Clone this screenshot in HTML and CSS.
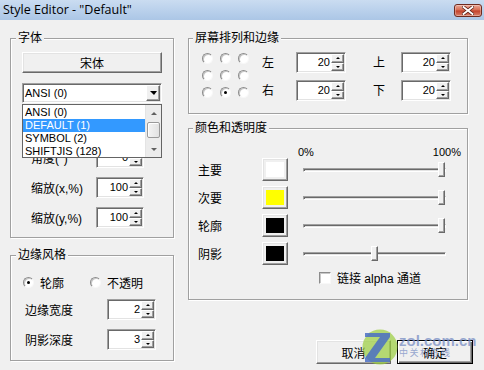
FILE: index.html
```html
<!DOCTYPE html>
<html>
<head>
<meta charset="utf-8">
<title>Style Editor</title>
<link rel="stylesheet" href="styles.css">
</head>
<body>
<div class="window">
  <div class="titlebar">
    <span class="title">Style Editor - "Default"</span>
    <span class="close"><svg width="12" height="9" viewBox="0 0 12 9"><path d="M1.5 1L10.5 8M10.5 1L1.5 8" stroke="#5a2018" stroke-width="3.4" stroke-linecap="square"/><path d="M1.5 1L10.5 8M10.5 1L1.5 8" stroke="#fff" stroke-width="1.8" stroke-linecap="square"/></svg></span>
  </div>

  <div class="content">
    <div class="col col-left">
      <div class="group g-font">
        <div class="gtitle">字体</div>
        <div class="btn fontbtn">宋体</div>
        <div class="combo"><span class="ctext">ANSI (0)</span><span class="cbtn"><i class="tri-down"></i></span></div>
        <div class="row r-first"><span class="lbl">角度(°)</span><div class="spin"><span class="val">0</span><span class="arrows"><i class="up"></i><i class="dn"></i></span></div></div>
        <div class="row"><span class="lbl">缩放(x,%)</span><div class="spin"><span class="val">100</span><span class="arrows"><i class="up"></i><i class="dn"></i></span></div></div>
        <div class="row"><span class="lbl">缩放(y,%)</span><div class="spin"><span class="val">100</span><span class="arrows"><i class="up"></i><i class="dn"></i></span></div></div>

        <div class="dropdown">
          <div class="items">
            <div class="item">ANSI (0)</div>
            <div class="item sel">DEFAULT (1)</div>
            <div class="item">SYMBOL (2)</div>
            <div class="item">SHIFTJIS (128)</div>
          </div>
          <div class="sb">
            <div class="sb-btn"><i class="sb-up"></i></div>
            <div class="sb-track"><div class="sb-thumb"></div></div>
            <div class="sb-btn"><i class="sb-dn"></i></div>
          </div>
        </div>
      </div>

      <div class="group g-edge">
        <div class="gtitle">边缘风格</div>
        <div class="radio-row">
          <label class="ropt"><i class="radio on"></i>轮廓</label>
          <label class="ropt ropt2"><i class="radio"></i>不透明</label>
        </div>
        <div class="row r-e1"><span class="lbl">边缘宽度</span><div class="spin"><span class="val">2</span><span class="arrows"><i class="up"></i><i class="dn"></i></span></div></div>
        <div class="row"><span class="lbl">阴影深度</span><div class="spin"><span class="val">3</span><span class="arrows"><i class="up"></i><i class="dn"></i></span></div></div>
      </div>
    </div>

    <div class="col col-right">
      <div class="group g-pos">
        <div class="gtitle">屏幕排列和边缘</div>
        <div class="pos-body">
          <div class="rgrid">
            <i class="radio"></i><i class="radio"></i><i class="radio"></i>
            <i class="radio"></i><i class="radio"></i><i class="radio"></i>
            <i class="radio"></i><i class="radio on"></i><i class="radio"></i>
          </div>
          <div class="mgrid">
            <span class="mlbl">左</span>
            <div class="spin"><span class="val">20</span><span class="arrows"><i class="up"></i><i class="dn"></i></span></div>
            <span class="mlbl m2">上</span>
            <div class="spin"><span class="val">20</span><span class="arrows"><i class="up"></i><i class="dn"></i></span></div>
            <span class="mlbl">右</span>
            <div class="spin"><span class="val">20</span><span class="arrows"><i class="up"></i><i class="dn"></i></span></div>
            <span class="mlbl m2">下</span>
            <div class="spin"><span class="val">20</span><span class="arrows"><i class="up"></i><i class="dn"></i></span></div>
          </div>
        </div>
      </div>

      <div class="group g-color">
        <div class="gtitle">颜色和透明度</div>
        <div class="pct"><span>0%</span><span>100%</span></div>
        <div class="crow"><span class="clbl">主要</span><span class="swatch"><i style="background:#ffffff"></i></span><div class="slider"><div class="track"></div><i class="thumb" style="--v:1"></i></div></div>
        <div class="crow"><span class="clbl">次要</span><span class="swatch"><i style="background:#ffff00"></i></span><div class="slider"><div class="track"></div><i class="thumb" style="--v:1"></i></div></div>
        <div class="crow"><span class="clbl">轮廓</span><span class="swatch"><i style="background:#000000"></i></span><div class="slider"><div class="track"></div><i class="thumb" style="--v:1"></i></div></div>
        <div class="crow"><span class="clbl">阴影</span><span class="swatch"><i style="background:#000000"></i></span><div class="slider"><div class="track"></div><i class="thumb" style="--v:0.5"></i></div></div>
        <div class="chkrow"><i class="chk"></i><span>链接 alpha 通道</span></div>
      </div>

      <div class="buttons">
        <div class="btn dbtn">取消</div>
        <div class="btn dbtn default">确定</div>
      </div>
    </div>
  </div>

  <div class="watermark">
    <svg width="36" height="36" viewBox="0 0 36 36">
      <circle cx="18" cy="18" r="17.5" fill="#9acd3c" opacity="0.7"/>
      <path d="M3 4H28V8L13 29H28V33H3V29L18 8H3Z" fill="#4a6fc4" opacity="0.85"/>
    </svg>
    <div class="wm-text">
      <span class="wm-big">zol.com.cn</span>
      <span class="wm-small">中关村在线</span>
    </div>
  </div>
</div>
</body>
</html>
```

FILE: styles.css
```css
* { box-sizing: border-box; }
html, body { margin: 0; padding: 0; }
body {
  width: 484px;
  height: 370px;
  overflow: hidden;
  background: #f0f0f0;
  font-family: "Liberation Sans", "Noto Sans CJK SC", sans-serif;
  font-size: 12px;
  color: #000;
}
i { display: block; font-style: normal; }

.window { position: relative; width: 484px; height: 370px; }

/* title bar */
.titlebar {
  height: 20px;
  background: linear-gradient(#cadcf1, #abc6e6);
  display: flex;
  align-items: center;
  justify-content: space-between;
  padding: 0 2px 0 3px;
}
.title {
  font-family: "Open Sans", "DejaVu Sans", sans-serif;
  font-size: 12.5px;
  line-height: 20px;
  color: #000;
}
.close {
  width: 28px;
  height: 13px;
  border: 1px solid #6e2b20;
  border-radius: 3px;
  background: linear-gradient(#eaa898, #d66a50 48%, #c2402a 52%, #d9806a);
  box-shadow: inset 0 0 0 1px rgba(255,255,255,0.3);
  display: flex;
  align-items: center;
  justify-content: center;
}
.close svg { display: block; }

/* layout */
.content {
  display: flex;
  gap: 14px;
  padding: 18px 0 0 10px;
}
.col-left { width: 164px; display: flex; flex-direction: column; }
.col-right { width: 280px; display: flex; flex-direction: column; }

.group {
  position: relative;
  border: 1px solid #a0a0a0;
  box-shadow: inset 1px 1px #fff, 1px 1px #fff;
}
.gtitle {
  margin-top: -8px;
  height: 14px;
  line-height: 14px;
  width: fit-content;
  padding: 0 2px;
  background: #f0f0f0;
  white-space: nowrap;
}

/* 3D primitives */
.btn {
  display: flex;
  align-items: center;
  justify-content: center;
  background: #f0f0f0;
  border: 1px solid;
  border-color: #fff #696969 #696969 #fff;
  box-shadow: inset -1px -1px #a0a0a0, inset 1px 1px #e3e3e3;
}

.spin {
  display: flex;
  width: 48px;
  height: 21px;
  border: 1px solid;
  border-color: #a0a0a0 #fff #fff #a0a0a0;
  box-shadow: inset 1px 1px #696969, inset -1px -1px #e3e3e3;
  background: #fff;
  padding: 1px;
}
.spin .val {
  flex: 1;
  text-align: right;
  font-size: 11px;
  line-height: 17px;
  padding-right: 1px;
}
.spin .arrows {
  width: 13px;
  display: flex;
  flex-direction: column;
}
.spin .up, .spin .dn {
  flex: 1;
  position: relative;
  background: #f0f0f0;
  border: 1px solid;
  border-color: #fff #696969 #696969 #fff;
  box-shadow: inset -1px -1px #a0a0a0;
}
.spin .up::after, .spin .dn::after {
  content: "";
  position: absolute;
  left: 50%;
  top: 50%;
  margin-left: -2px;
  margin-top: -1px;
  border-left: 2px solid transparent;
  border-right: 2px solid transparent;
}
.spin .up::after { border-bottom: 2px solid #000; }
.spin .dn::after { border-top: 2px solid #000; }

.radio {
  width: 11px;
  height: 11px;
  border-radius: 50%;
  border: 1px solid;
  border-color: #8c8c8c #f8f8f8 #f8f8f8 #8c8c8c;
  background: #fff;
  box-shadow: inset 1px 1px #c8c8c8;
  position: relative;
  flex: none;
}
.radio.on::after {
  content: "";
  position: absolute;
  left: 3px;
  top: 3px;
  width: 3px;
  height: 3px;
  border-radius: 50%;
  background: #000;
}

/* font group */
.g-font { padding: 0 11px 9px 11px; }
.g-font .gtitle { margin-left: -6px; }
.fontbtn { margin-top: 7px; height: 21px; }
.combo {
  margin-top: 10px;
  height: 20px;
  display: flex;
  align-items: center;
  background: #fff;
  border: 1px solid;
  border-color: #a0a0a0 #fff #fff #a0a0a0;
  box-shadow: inset 1px 1px #696969, inset -1px -1px #e3e3e3;
  padding: 0 1px 0 1px;
}
.ctext { flex: 1; font-size: 11px; padding-left: 1px; }
.cbtn {
  width: 14px;
  height: 16px;
  background: #f0f0f0;
  border: 1px solid;
  border-color: #fff #696969 #696969 #fff;
  box-shadow: inset -1px -1px #a0a0a0;
  display: flex;
  align-items: center;
  justify-content: center;
}
.tri-down {
  border-left: 4px solid transparent;
  border-right: 3px solid transparent;
  border-top: 4px solid #000;
}

.row { display: flex; align-items: center; margin-top: 9px; }
.row .lbl { width: 74px; padding-left: 9px; white-space: nowrap; }
.r-first { margin-top: 44px; }

.dropdown {
  position: absolute;
  left: 11px;
  top: 65px;
  width: 140px;
  height: 54px;
  border: 1px solid #646464;
  background: #fff;
  display: flex;
  overflow: hidden;
}
.items { flex: 1; padding-top: 1px; }
.item {
  height: 13px;
  line-height: 13px;
  font-size: 11px;
  padding-left: 2px;
  white-space: nowrap;
}
.item.sel { background: #3399ff; color: #fff; }
.sb {
  width: 16px;
  background: #ececec;
  display: flex;
  flex-direction: column;
  border-left: 1px solid #e4e4e4;
}
.sb-btn {
  height: 16px;
  display: flex;
  align-items: center;
  justify-content: center;
}
.sb-up {
  border-left: 3px solid transparent;
  border-right: 3px solid transparent;
  border-bottom: 3px solid #606060;
}
.sb-dn {
  border-left: 3px solid transparent;
  border-right: 3px solid transparent;
  border-top: 3px solid #606060;
}
.sb-track { flex: 1; padding: 1px 0 0 0; }
.sb-thumb {
  height: 16px;
  margin: 0 1px;
  border: 1px solid #9a9a9a;
  border-radius: 2px;
  background: linear-gradient(90deg, #f4f4f4, #e2e2e2);
  box-shadow: inset 1px 1px #fff;
}

/* edge group */
.g-edge { margin-top: 17px; padding: 0 11px 10px 12px; }
.g-edge .gtitle { margin-left: -7px; }
.radio-row { display: flex; align-items: center; height: 13px; margin-top: 14px; }
.ropt { display: flex; align-items: center; gap: 6px; white-space: nowrap; }
.ropt2 { margin-left: 26px; }
.g-edge .row .lbl { width: 84px; padding-left: 2px; }
.g-edge .spin { width: 49px; }
.r-e1 { margin-top: 10px; }

/* position group */
.g-pos { padding: 0 0 12px 13px; }
.g-pos .gtitle { margin-left: -9px; }
.pos-body { display: flex; margin-top: 7px; }
.rgrid {
  display: grid;
  grid-template-columns: repeat(3, 11px);
  grid-auto-rows: 11px;
  column-gap: 7px;
  row-gap: 6px;
  margin-top: 1px;
}
.mgrid {
  margin-left: 13px;
  display: grid;
  grid-template-columns: 34px 50px 55px 50px;
  row-gap: 7px;
  align-items: center;
}
.mgrid .spin { width: 50px; }
.mlbl { line-height: 14px; }
.mlbl.m2 { padding-left: 27px; }

/* colour group */
.g-color { margin-top: 14px; padding: 0 6px 15px 9px; }
.g-color .gtitle { margin-left: -5px; }
.pct {
  margin-top: 11px;
  height: 12px;
  line-height: 12px;
  font-size: 11px;
  display: flex;
  justify-content: space-between;
  padding-left: 100px;
}
.crow { display: flex; align-items: center; height: 23px; margin-top: 5px; }
.pct + .crow { margin-top: 0; }
.clbl { width: 64px; }
.swatch {
  width: 26px;
  height: 23px;
  padding: 3px;
  background: #f0f0f0;
  border: 1px solid;
  border-color: #fff #696969 #696969 #fff;
  box-shadow: inset -1px -1px #a0a0a0, inset 1px 1px #e3e3e3;
}
.swatch i { width: 100%; height: 100%; }
.slider {
  position: relative;
  margin-left: 15px;
  width: 143px;
  height: 15px;
  display: flex;
  align-items: center;
}
.track {
  width: 100%;
  height: 4px;
  border: 1px solid;
  border-color: #a0a0a0 #fff #fff #a0a0a0;
  box-shadow: inset 1px 1px #696969;
  background: #e3e3e3;
}
.thumb {
  position: absolute;
  top: 0;
  left: calc(var(--v) * 134px + 1px);
  width: 7px;
  height: 15px;
  background: #f0f0f0;
  border: 1px solid;
  border-color: #fff #696969 #696969 #fff;
  box-shadow: inset -1px -1px #a0a0a0;
}
.chkrow {
  display: flex;
  align-items: center;
  gap: 6px;
  height: 13px;
  margin-top: 6px;
  padding-left: 121px;
  white-space: nowrap;
}
.chk {
  width: 12px;
  height: 12px;
  background: #fff;
  border: 1px solid;
  border-color: #8c8c8c #f8f8f8 #f8f8f8 #8c8c8c;
  box-shadow: inset 1px 1px #c8c8c8;
}

/* dialog buttons */
.buttons {
  display: flex;
  justify-content: flex-end;
  gap: 6px;
  margin-top: 40px;
  margin-right: -5px;
}
.dbtn { width: 75px; height: 24px; }
.dbtn.default {
  width: 76px;
  border: 1px solid #000;
  box-shadow: inset 1px 1px #fff, inset -1px -1px #696969, inset -2px -2px #a0a0a0;
}

/* watermark overlay */
.watermark {
  position: absolute;
  left: 362px;
  top: 329px;
  display: flex;
  align-items: flex-start;
  pointer-events: none;
}
.watermark svg { display: block; flex: none; }
.wm-text {
  display: flex;
  flex-direction: column;
  margin-left: 1px;
  margin-top: 5px;
  white-space: nowrap;
  color: rgba(120, 142, 196, 0.75);
}
.wm-big {
  font-family: "Liberation Sans", sans-serif;
  font-weight: bold;
  font-size: 15px;
  line-height: 14px;
  letter-spacing: 0;
}
.wm-small {
  font-size: 9px;
  line-height: 11px;
  letter-spacing: 1.5px;
}
```
